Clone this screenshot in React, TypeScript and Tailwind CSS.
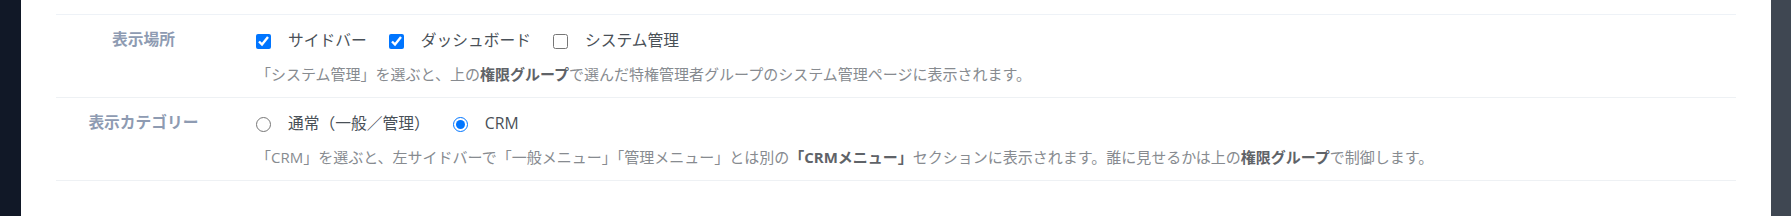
import React from "react";

const FONT = "font-['Open_Sans','Noto_Sans_CJK_JP',sans-serif]";

function Check({ label, checked }: { label: string; checked?: boolean }) {
  return (
    <label className="flex items-center mr-[22px]">
      <input
        type="checkbox"
        defaultChecked={checked}
        className="m-0 w-[15px] h-[15px] accent-[#0075ff]"
      />
      <span className="ml-[17px] text-[15.75px] text-[#495057]">{label}</span>
    </label>
  );
}

function Radio({ label, checked }: { label: string; checked?: boolean }) {
  return (
    <label className="flex items-center mr-[23px]">
      <input
        type="radio"
        name="cat"
        defaultChecked={checked}
        className="m-0 w-[15px] h-[15px] accent-[#0075ff]"
      />
      <span className="ml-[17px] text-[15.75px] text-[#495057]">{label}</span>
    </label>
  );
}

function Row({
  label,
  children,
  help,
}: {
  label: string;
  children: React.ReactNode;
  help: React.ReactNode;
}) {
  return (
    <div className="flex border-b border-[#eef1f4] pt-[14px] pb-[12px]">
      <div className="w-[175px] shrink-0 text-center text-[15.75px] leading-5 font-semibold text-[#8e9bb2]">
        {label}
      </div>
      <div className="ml-[25px] flex-1">
        <div className="flex h-6 items-center">{children}</div>
        <div className="mt-[11px] text-[15px] leading-[21px] text-[#878b90]">{help}</div>
      </div>
    </div>
  );
}

export default function App() {
  return (
    <div className={`flex h-[216px] w-full ${FONT}`}>
      <div className="w-[21px] shrink-0 bg-[#111827]" />
      <div className="flex-1 bg-white pt-[14px] px-[35px]">
        <div className="border-t border-[#eef2f7]">
          <Row
            label="表示場所"
            help={
              <>
                「システム管理」を選ぶと、上の<b className="font-bold text-[#5f6368]">権限グループ</b>で選んだ特権管理者グループのシステム管理ページに表示されます。
              </>
            }
          >
            <Check label="サイドバー" checked />
            <Check label="ダッシュボード" checked />
            <Check label="システム管理" />
          </Row>
          <Row
            label="表示カテゴリー"
            help={
              <>
                「CRM」を選ぶと、左サイドバーで「一般メニュー」「管理メニュー」とは別の
                <b className="font-bold text-[#5f6368]">「CRMメニュー」</b>
                セクションに表示されます。誰に見せるかは上の<b className="font-bold text-[#5f6368]">権限グループ</b>で制御します。
              </>
            }
          >
            <Radio label="通常（一般／管理）" />
            <Radio label="CRM" checked />
          </Row>
        </div>
      </div>
      <div className="w-[20px] shrink-0 bg-[#3f4752]" />
    </div>
  );
}
